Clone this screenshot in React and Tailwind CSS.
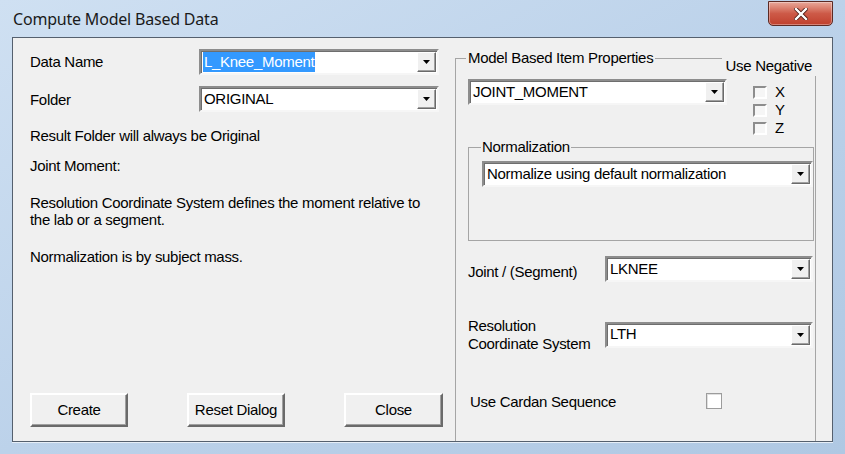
import React from "react";

const font = { fontFamily: '"Liberation Sans", Arial, sans-serif' };

// small down arrow used in every combo box
const DropButton = () => (
  <div className="my-[1px] mr-[1px] flex w-[19px] items-center justify-center border border-t-white border-l-white border-r-[#6a6a6a] border-b-[#6a6a6a] bg-[#f0f0f0] shadow-[inset_-1px_-1px_0_#a0a0a0]">
    <svg width="7" height="4" viewBox="0 0 7 4">
      <polygon points="0,0 7,0 3.5,4" fill="#000" />
    </svg>
  </div>
);

const Combo = ({ value, selected, width }) => (
  <div
    className="flex h-[26px] border-2 border-t-[#8d8d8d] border-l-[#8d8d8d] border-r-[#f6f6f6] border-b-[#f6f6f6] bg-white shadow-[inset_1px_1px_0_#6e6e6e]"
    style={{ width }}
  >
    <div className="flex flex-1 items-center pl-[2px]">
      {selected ? (
        <span className="bg-[#3399ff] px-[1px] leading-[20px] text-white">{value}</span>
      ) : (
        <span className="pl-[1px]">{value}</span>
      )}
    </div>
    <DropButton />
  </div>
);

const Button = ({ children, width }) => (
  <div
    className="flex h-[34px] items-center justify-center border-2 border-t-white border-l-white border-r-[#6a6a6a] border-b-[#6a6a6a] bg-[#f0f0f0] shadow-[inset_-1px_-1px_0_#a0a0a0]"
    style={{ width }}
  >
    {children}
  </div>
);

const SmallCheck = ({ label }) => (
  <div className="flex h-[18px] items-center">
    <div className="h-[13px] w-[14px] border-2 border-t-[#8d8d8d] border-l-[#8d8d8d] border-r-white border-b-white bg-[#f6f6f6]" />
    <span className="ml-[8px] text-[15px]">{label}</span>
  </div>
);

export default function App() {
  return (
    <div
      className="flex h-[454px] w-[845px] flex-col bg-linear-to-br from-[#cfe0f2] via-[#bcd2ea] to-[#afc8e3] text-[15px] tracking-[-0.3px] text-black"
      style={font}
    >
      {/* Title bar */}
      <div className="flex h-[37px] items-start justify-between">
        <div
          className="pl-[13px] pt-[7px] text-[16px] tracking-[-0.2px] text-[#1a1a1a]"
          style={{ fontFamily: '"Noto Sans", "Open Sans", sans-serif' }}
        >
          Compute Model Based Data
        </div>
        <div className="mr-[12px] mt-[1px] flex h-[25px] w-[65px] items-center justify-center rounded-b-[5px] border border-[#5c2a24] bg-linear-to-b from-[#e8a89a] via-[#cd5a48] to-[#c03f2c] shadow-[inset_0_0_0_1px_rgba(255,255,255,0.35)]">
          <svg width="14" height="12" viewBox="0 0 14 12">
            <path d="M2 1 L12 11 M12 1 L2 11" stroke="#4a1a14" strokeWidth="4" strokeLinecap="square" />
            <path d="M2 1 L12 11 M12 1 L2 11" stroke="#ffffff" strokeWidth="2.4" strokeLinecap="square" />
          </svg>
        </div>
      </div>

      {/* Client area */}
      <div className="mx-[12px] mb-[12px] flex flex-1 border border-[#55606e] bg-[#f0f0f0] shadow-[0_1px_0_#e6eef7]">
        {/* Left side */}
        <div className="flex w-[442px] flex-col pl-[17px]">
          <div className="mt-[11px] flex h-[26px] items-center">
            <span className="w-[169px] pt-[1px]">Data Name</span>
            <Combo value="L_Knee_Moment" selected width={240} />
          </div>
          <div className="mt-[11px] flex h-[26px] items-center">
            <span className="w-[169px] pt-[2px]">Folder</span>
            <Combo value="ORIGINAL" width={240} />
          </div>
          <div className="mt-[15px] leading-[18px]">Result Folder will always be Original</div>
          <div className="mt-[12px] leading-[18px]">Joint Moment:</div>
          <div className="mt-[19px] w-[410px] leading-[17px]">
            Resolution Coordinate System defines the moment relative to the lab or a segment.
          </div>
          <div className="mt-[20px] leading-[18px]">Normalization is by subject mass.</div>

          <div className="mb-[14px] mt-auto flex gap-[59px]">
            <Button width={98}>Create</Button>
            <Button width={98}>Reset Dialog</Button>
            <Button width={99}>Close</Button>
          </div>
        </div>

        {/* Right side: Model Based Item Properties group */}
        <div className="relative mt-[20px] flex w-[361px] flex-col border-l border-r border-t border-[#a5a5a5]">
          <span className="absolute -top-[10px] left-[10px] bg-[#f0f0f0] px-[2px] leading-[18px]">
            Model Based Item Properties
          </span>
          <span className="absolute -right-[1px] -top-[3px] bg-[#f0f0f0] pl-[4px] pr-[4px] leading-[20px]">
            Use Negative
          </span>

          <div className="mt-[20px] flex h-[68px] items-start">
            <div className="ml-[12px]">
              <Combo value="JOINT_MOMENT" width={259} />
            </div>
            <div className="ml-[26px] mt-[4px] flex flex-col">
              <SmallCheck label="X" />
              <SmallCheck label="Y" />
              <SmallCheck label="Z" />
            </div>
          </div>

          {/* Normalization group */}
          <div className="relative ml-[12px] h-[94px] w-[346px] border border-[#a5a5a5]">
            <span className="absolute -top-[10px] left-[12px] bg-[#f0f0f0] px-[1px] leading-[18px]">
              Normalization
            </span>
            <div className="ml-[13px] mt-[13px]">
              <Combo value="Normalize using default normalization" width={331} />
            </div>
          </div>

          <div className="mt-[14px] flex items-center">
            <span className="w-[149px] pl-[12px] pt-[6px]">Joint / (Segment)</span>
            <Combo value="LKNEE" width={208} />
          </div>

          <div className="mt-[33px] flex items-center">
            <div className="w-[149px] pl-[12px] leading-[18px]">
              <div>Resolution</div>
              <div>Coordinate System</div>
            </div>
            <Combo value="LTH" width={208} />
          </div>

          <div className="mt-[37px] flex items-center">
            <span className="w-[250px] pl-[14px] pt-[1px]">Use Cardan Sequence</span>
            <div className="h-[16px] w-[16px] border border-[#9c9c9c] bg-white shadow-[inset_1px_1px_0_#e0e0e0]" />
          </div>
        </div>
      </div>
    </div>
  );
}
